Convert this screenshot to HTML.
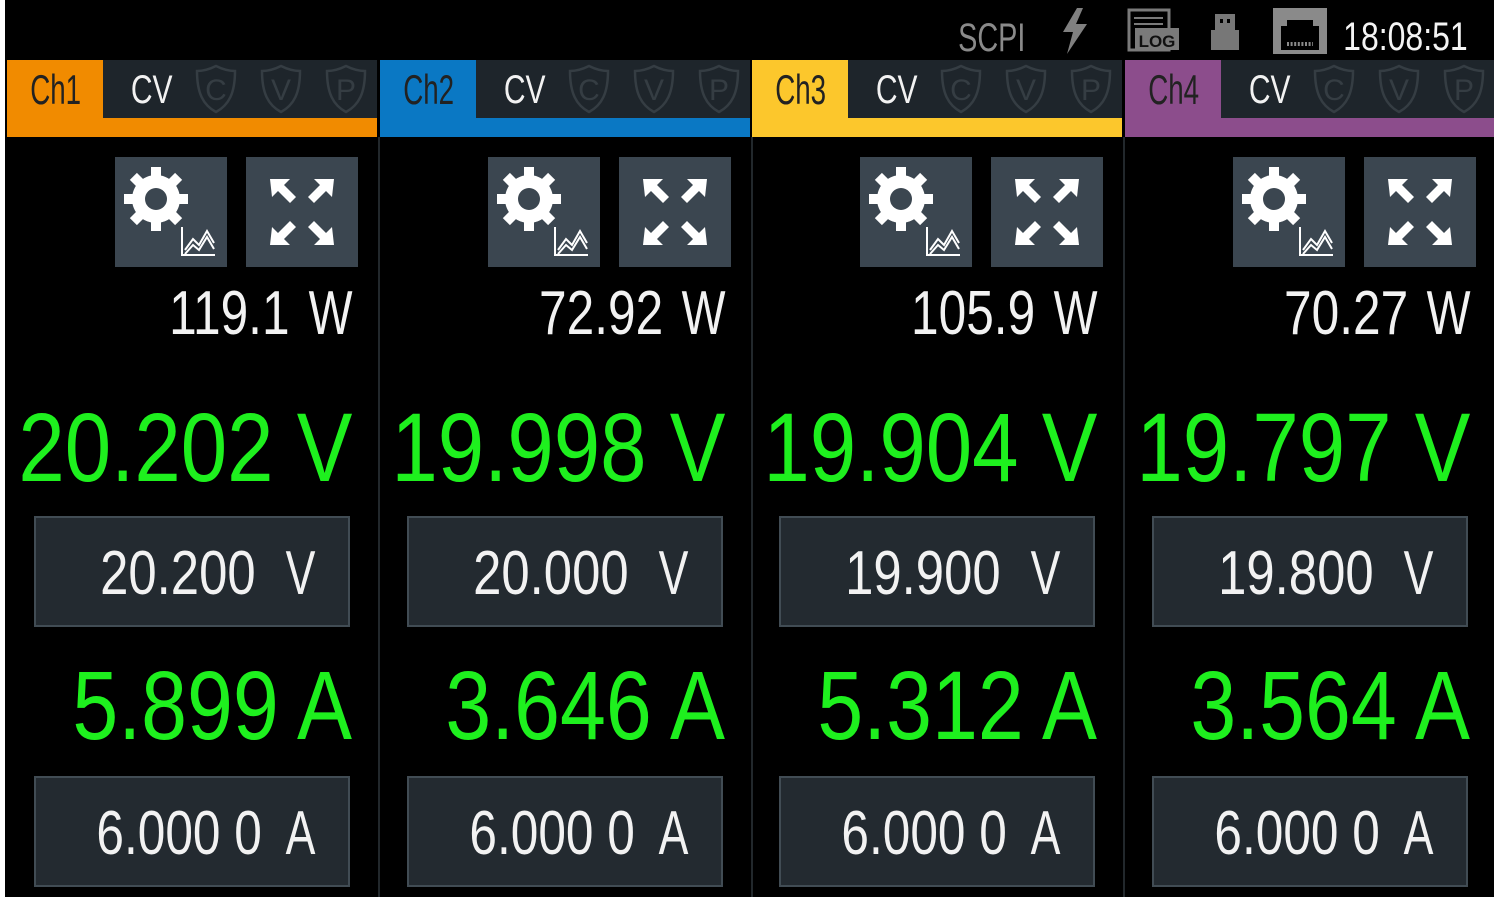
<!DOCTYPE html>
<html><head><meta charset="utf-8"><style>
*{margin:0;padding:0;box-sizing:border-box}
body{width:1498px;height:900px;background:#fff;position:relative;overflow:hidden;font-family:"Liberation Sans",sans-serif}
#scr{position:absolute;left:5px;top:0;width:1489px;height:897px;background:#000;overflow:hidden}
.col{position:absolute;top:0;width:372px;height:897px}
.abs{position:absolute}
.t{position:absolute;white-space:pre;line-height:1;text-align:right}
.t span{display:inline-block;transform-origin:right center}
.hdr{position:absolute;left:0;top:60px;width:370px;height:58px;background:#1e252b}
.tab{position:absolute;left:0;top:60px;width:96px;height:58px}
.bar{position:absolute;left:0;top:118px;width:370px;height:19px}
.sep{position:absolute;left:371px;top:137px;width:2px;height:760px;background:#22282c}
.btn{position:absolute;top:157px;width:112px;height:110px;background:#3b4650}
.box{position:absolute;left:27px;width:316px;height:111px;background:#232a30;border:2px solid #414c54}
.g{color:#1ef01e}
.w{color:#f2f2f2}
</style></head><body>
<div id="scr">
<div class="t" style="left:20px;top:18px;width:1000px;font-size:40px;color:#8a8a8a"><span style="transform:scaleX(.72)">SCPI</span></div>
<svg class="abs" style="left:1050px;top:6px" width="40" height="50" viewBox="0 0 40 50"><path d="M22 2 L8 26 L18 26 L12 48 L32 18 L21 18 L28 2Z" fill="#808080"/></svg>
<svg class="abs" style="left:1120px;top:8px" width="60" height="46" viewBox="0 0 60 46"><rect x="4" y="2" width="40" height="40" fill="none" stroke="#7a7a7a" stroke-width="3"/><line x1="9" y1="10" x2="38" y2="10" stroke="#7a7a7a" stroke-width="2"/><line x1="9" y1="16" x2="38" y2="16" stroke="#7a7a7a" stroke-width="2"/><rect x="10" y="20" width="44" height="22" fill="#7a7a7a"/><text x="32" y="39" font-size="17" font-family="Liberation Sans" font-weight="bold" fill="#111" text-anchor="middle">LOG</text></svg>
<svg class="abs" style="left:1200px;top:12px" width="40" height="40" viewBox="0 0 40 40"><rect x="10" y="2" width="20" height="16" fill="#777"/><rect x="15" y="7" width="3" height="4" fill="#000"/><rect x="22" y="7" width="3" height="4" fill="#000"/><rect x="6" y="18" width="28" height="20" fill="#777"/></svg>
<svg class="abs" style="left:1266px;top:6px" width="58" height="50" viewBox="0 0 58 50"><rect x="2" y="2" width="54" height="46" fill="#8a8a8a"/><path d="M10 44 V20 H16 V14 H42 V20 H48 V44Z" fill="#000"/><path d="M16 38h26" stroke="#8a8a8a" stroke-width="4" stroke-dasharray="2 1.6"/></svg>
<div class="t" style="left:463px;top:17px;width:1000px;font-size:40px;color:#f4f4f4"><span style="transform:scaleX(.8)">18:08:51</span></div>

<div id="cols"></div>
</div>
<script>
var C=[["Ch1","#f18b00","119.1","20.202","20.200","5.899"],["Ch2","#0a78c4","72.92","19.998","20.000","3.646"],["Ch3","#fcc72c","105.9","19.904","19.900","5.312"],["Ch4","#8c4d8c","70.27","19.797","19.800","3.564"]];
var L=[2,375,747,1120],h="";
function T(cls,right,top,fs,sc,txt,col){return '<div class="t '+cls+'" style="left:'+(right-1000)+'px;top:'+top+'px;width:1000px;font-size:'+fs+'px'+(col?';color:'+col:'')+'"><span style="transform:scaleX('+sc+')">'+txt+'</span></div>';}
function sh(x,l){return '<svg class="abs" style="left:'+x+'px;top:63px" width="46" height="52" viewBox="0 0 46 52"><path d="M23 3 C15 7 9 8 4 8 C4 30 10 42 23 49 C36 42 42 30 42 8 C37 8 31 7 23 3Z" fill="none" stroke="#353d43" stroke-width="2.5"/><text x="23" y="37" font-size="30" font-family=\'Liberation Sans\' fill="#353d43" text-anchor="middle">'+l+'</text></svg>';}
var AR='<path d="M24 22 H44 L38 28 L50 40 L44 46 L32 34 L26 40Z"/>';
C.forEach(function(c,i){
h+='<div class="col" style="left:'+L[i]+'px">';
h+='<div class="hdr"></div><div class="tab" style="background:'+c[1]+'"></div><div class="bar" style="background:'+c[1]+'"></div>';
if(i<3)h+='<div class="sep"></div>';
h+=T('',74,69,42,.66,c[0],'#222');
h+=T('',166,70,40,.75,'CV','#f2f2f2');
h+=sh(186,"C")+sh(251,"V")+sh(316,"P");
h+='<div class="btn" style="left:108px"><svg width="112" height="110" viewBox="0 0 112 110"><g transform="translate(41,42)" fill="#fff">';
for(var k=0;k<8;k++)h+='<rect x="-5" y="-32" width="10" height="14" transform="rotate('+(k*45)+')"/>';
h+='<circle r="24"/><circle r="11" fill="#3b4650"/></g><g fill="none" stroke="#fff" stroke-width="2"><path d="M67 70 V98 H100"/><path d="M70 93 L78 82 L84 88 L92 74 L99 86"/><path d="M70 97 L78 88 L84 93 L92 80 L99 92"/></g></svg></div>';
h+='<div class="btn" style="left:239px"><svg width="112" height="110" viewBox="0 0 112 110" fill="#fff">'+AR+'<g transform="translate(112,0) scale(-1,1)">'+AR+'</g><g transform="translate(0,110) scale(1,-1)">'+AR+'</g><g transform="translate(112,110) scale(-1,-1)">'+AR+'</g></svg></div>';
h+=T('w',283,283,62,.8,c[2]);
h+=T('w',346,283,62,.75,'W');
h+=T('g',345,399,97,.86,c[3]+' V');
h+='<div class="box" style="top:516px"></div>';
h+=T('w',249,543,62,.82,c[4]);
h+=T('w',308,543,62,.72,'V');
h+=T('g',345,657,97,.85,c[5]+' A');
h+='<div class="box" style="top:776px"></div>';
h+=T('w',255,803,62,.8,'6.000 0');
h+=T('w',308,803,62,.72,'A');
h+='</div>';
});
document.getElementById("cols").innerHTML=h;
</script>
</body></html>
